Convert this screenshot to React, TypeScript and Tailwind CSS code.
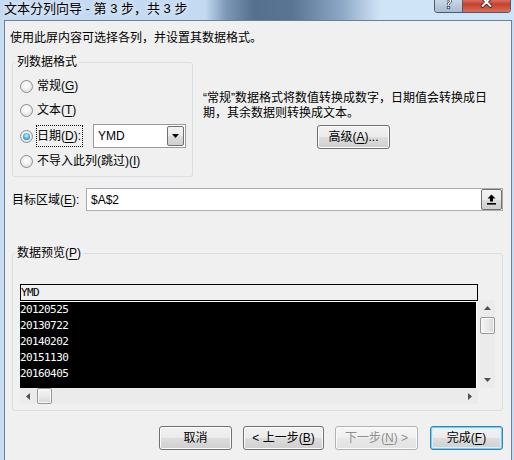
import React from "react";

const ui = "font-['Liberation_Sans','Noto_Sans_CJK_SC',sans-serif]";
const mono = "font-['DejaVu_Sans_Mono','Liberation_Mono',monospace]";

// underlined access key, like Windows shows them
const Key = ({ k }: { k: string }) => <u className="underline-offset-[2px]">{k}</u>;

const Radio = ({ checked }: { checked?: boolean }) => (
  <span className="flex h-[13px] w-[13px] shrink-0 items-center justify-center rounded-full border border-[#8e8f8f] bg-[#e9e9e9] bg-[radial-gradient(circle_at_45%_40%,#ffffff_0%,#f2f2f2_45%,#cdcdcd_100%)]">
    {checked && (
      <span className="h-[7px] w-[7px] rounded-full bg-[#3f8fd2] bg-[radial-gradient(circle_at_50%_40%,#d6f5ff_0%,#5db9f2_45%,#1b568f_100%)]" />
    )}
  </span>
);

type BtnProps = {
  className?: string;
  kind?: "normal" | "disabled" | "default";
  children: React.ReactNode;
};

const Btn: React.FC<BtnProps> = ({ className = "", kind = "normal", children }) => {
  const look =
    kind === "disabled"
      ? "border-[#adb2b5] bg-[#efefef] bg-[linear-gradient(#f6f6f6_0%,#f0f0f0_50%,#e8e8e8_51%,#e2e2e2_100%)] text-[#8f8f8f] shadow-[inset_0_0_0_1px_#fbfbfb]"
      : kind === "default"
        ? "border-[#3c7fb1] bg-[#e2e2e2] bg-[linear-gradient(#f2f2f2_0%,#ebebeb_50%,#dddddd_51%,#cfcfcf_100%)] shadow-[inset_0_0_0_1px_#6fd0f8,inset_0_0_0_2px_#d6f1fc]"
        : "border-[#707070] bg-[#e2e2e2] bg-[linear-gradient(#f2f2f2_0%,#ebebeb_50%,#dddddd_51%,#cfcfcf_100%)] shadow-[inset_0_0_0_1px_#fcfcfc]";
  return (
    <button
      type="button"
      className={`flex h-[24px] shrink-0 items-center justify-center rounded-[3px] border leading-none ${look} ${className}`}
    >
      {children}
    </button>
  );
};

const Arrow = ({ dir }: { dir: "up" | "down" | "left" | "right" }) => {
  const pts = {
    up: "0,4 7,4 3.5,0",
    down: "0,0 7,0 3.5,4",
    left: "4,0 4,7 0,3.5",
    right: "0,0 0,7 4,3.5",
  }[dir];
  const vert = dir === "up" || dir === "down";
  return (
    <svg width={vert ? 7 : 4} height={vert ? 4 : 7} viewBox={vert ? "0 0 7 4" : "0 0 4 7"}>
      <polygon points={pts} fill="#505050" />
    </svg>
  );
};

const HScroll = () => (
  <div className="flex h-[16px] w-[458px] items-center bg-[#ebebeb]">
    <div className="flex h-[16px] w-[16px] items-center justify-center">
      <Arrow dir="left" />
    </div>
    <div className="ml-[1px] h-[16px] w-[15px] rounded-[2px] border border-[#979797] bg-[#e6e6e6] bg-[linear-gradient(#f5f5f5_0%,#e6e6e6_60%,#d6d6d6_100%)] shadow-[inset_0_0_0_1px_#fafafa]" />
    <div className="flex-1" />
    <div className="flex h-[16px] w-[16px] items-center justify-center">
      <Arrow dir="right" />
    </div>
  </div>
);

const VScroll = () => (
  <div className="flex h-[88px] w-[15px] flex-col items-center bg-[#ebebeb]">
    <div className="flex h-[16px] w-[15px] items-center justify-center">
      <Arrow dir="up" />
    </div>
    <div className="mt-[1px] h-[17px] w-[15px] rounded-[2px] border border-[#979797] bg-[#e6e6e6] bg-[linear-gradient(to_right,#f5f5f5_0%,#e6e6e6_60%,#d6d6d6_100%)] shadow-[inset_0_0_0_1px_#fafafa]" />
    <div className="flex-1" />
    <div className="flex h-[16px] w-[15px] items-center justify-center">
      <Arrow dir="down" />
    </div>
  </div>
);

// blurred desktop seen through the aero glass of the title bar
const GlassBlob = () => (
  <svg width="175" height="20" viewBox="0 0 175 20" className="shrink-0">
    <defs>
      <linearGradient id="blob" x1="0" y1="0" x2="1" y2="0">
        <stop offset="0" stopColor="#c4daf2" />
        <stop offset="0.12" stopColor="#7d98b7" />
        <stop offset="0.28" stopColor="#55708f" />
        <stop offset="0.5" stopColor="#5a7593" />
        <stop offset="0.78" stopColor="#8ca8c6" />
        <stop offset="1" stopColor="#d0e4f7" />
      </linearGradient>
    </defs>
    <rect width="175" height="20" fill="url(#blob)" />
  </svg>
);

const CloseGlyph = () => (
  <svg width="47" height="12" viewBox="0 0 47 12" className="block">
    <defs>
      <linearGradient id="red" x1="0" y1="0" x2="0" y2="1">
        <stop offset="0" stopColor="#d9705d" />
        <stop offset="0.35" stopColor="#c7412f" />
        <stop offset="1" stopColor="#d8705a" />
      </linearGradient>
    </defs>
    <rect width="47" height="12" fill="url(#red)" />
    <path d="M19.5 -2 L27.5 6 M27.5 -2 L19.5 6" stroke="#3a1510" strokeWidth="3.6" strokeLinecap="round" />
    <path d="M19.5 -2 L27.5 6 M27.5 -2 L19.5 6" stroke="#ffffff" strokeWidth="2" strokeLinecap="round" />
  </svg>
);

const HelpGlyph = () => (
  <svg width="27" height="12" viewBox="0 0 27 12" className="block">
    <defs>
      <linearGradient id="help" x1="0" y1="0" x2="0" y2="1">
        <stop offset="0" stopColor="#c9d6e4" />
        <stop offset="1" stopColor="#a9bbd0" />
      </linearGradient>
    </defs>
    <rect width="27" height="12" fill="url(#help)" />
    <path d="M11 0.5 Q13.5 -1 15.5 0.5 Q16 2.5 13.5 3.5 L13.5 5" fill="none" stroke="#3d4b5c" strokeWidth="2.6" />
    <path d="M11 0.5 Q13.5 -1 15.5 0.5 Q16 2.5 13.5 3.5 L13.5 5" fill="none" stroke="#eef3f8" strokeWidth="1.2" />
    <rect x="12.3" y="6.3" width="2.4" height="2.4" fill="#eef3f8" stroke="#3d4b5c" strokeWidth="0.8" />
  </svg>
);

const rows = ["20120525", "20130722", "20140202", "20151130", "20160405"];

export default function App() {
  return (
    <div className={`h-[460px] w-[514px] overflow-hidden bg-[#c7dcf3] text-[12px] text-black ${ui}`}>
      {/* aero title bar */}
      <div className="flex h-[20px] bg-[#c4daf2]">
        <div className="w-[205px] shrink-0 pl-[4px] text-[13px] leading-[17px] whitespace-nowrap [text-shadow:0_0_6px_#ffffff]">
          文本分列向导 - 第 3 步，共 3 步
        </div>
        <GlassBlob />
        <div className="flex flex-1 bg-[#d0e4f7]">
          <div className="ml-auto mr-[3px] flex h-[13px] overflow-hidden rounded-b-[4px] border border-t-0 border-[#4b5a6e]">
            <div className="border-r border-[#4b5a6e]">
              <HelpGlyph />
            </div>
            <CloseGlyph />
          </div>
        </div>
      </div>

      {/* client area */}
      <div className="ml-[4px] h-[450px] w-[508px] border border-[#6e7f94] bg-[#f0f0f0]">
        <div className="pl-[5px] pt-[9px] leading-[16px]">使用此屏内容可选择各列，并设置其数据格式。</div>

        <div className="mt-[9px] flex pl-[7px]">
          <fieldset className="m-0 w-[181px] rounded-[3px] border border-[#d5dfe5] p-0 pb-[4px]">
            <legend className="ml-[2px] px-[2px] leading-[14px]">列数据格式</legend>
            <div className="pt-[5px]">
              <div className="flex h-[24px] items-center pl-[7px]">
                <Radio />
                <span className="ml-[4px]">
                  常规(<Key k="G" />)
                </span>
              </div>
              <div className="flex h-[24px] items-center pl-[7px]">
                <Radio />
                <span className="ml-[4px]">
                  文本(<Key k="T" />)
                </span>
              </div>
              <div className="flex h-[28px] items-center pl-[7px]">
                <Radio checked />
                <span className="ml-[3px] flex h-[22px] items-center border border-dotted border-black pr-[1px]">
                  日期(<Key k="D" />):
                </span>
                <div className="ml-[10px] flex h-[24px] w-[93px] border border-[#9a9a9a] bg-white">
                  <span className="flex-1 pl-[4px] leading-[22px]">YMD</span>
                  <span className="m-[1px] flex w-[17px] items-center justify-center rounded-[2px] border border-[#707070] bg-[#e2e2e2] bg-[linear-gradient(#f2f2f2_0%,#ebebeb_50%,#dddddd_51%,#cfcfcf_100%)]">
                    <svg width="7" height="4" viewBox="0 0 7 4">
                      <polygon points="0,0 7,0 3.5,4" fill="#000" />
                    </svg>
                  </span>
                </div>
              </div>
              <div className="flex h-[22px] items-center pl-[7px]">
                <Radio />
                <span className="ml-[4px]">
                  不导入此列(跳过)(<Key k="I" />)
                </span>
              </div>
            </div>
          </fieldset>

          <div className="ml-[10px] pt-[36px]">
            <p className="whitespace-nowrap leading-[15px]">“常规”数据格式将数值转换成数字，日期值会转换成日</p>
            <p className="leading-[15px]">期，其余数据则转换成文本。</p>
            <Btn className="ml-[114px] mt-[4px] w-[73px]">
              高级(<Key k="A" />)...
            </Btn>
          </div>
        </div>

        <div className="mt-[11px] flex items-center pl-[7px]">
          <span className="w-[74px]">
            目标区域(<Key k="E" />):
          </span>
          <div className="flex h-[23px] w-[417px] items-center border border-[#abadb3] bg-white">
            <span className="flex-1 pl-[4px]">$A$2</span>
            <span className="flex h-[21px] w-[21px] items-center justify-center rounded-[2px] border border-[#707070] bg-[#e2e2e2] bg-[linear-gradient(#f2f2f2_0%,#ebebeb_50%,#dddddd_51%,#cfcfcf_100%)]">
              <svg width="9" height="11" viewBox="0 0 9 11">
                <path d="M4.5 0.5 L8.5 4.5 L6 4.5 L6 7.5 L3 7.5 L3 4.5 L0.5 4.5 Z" fill="#000" />
                <rect x="0" y="9" width="9" height="1.6" fill="#000" />
              </svg>
            </span>
          </div>
        </div>

        <fieldset className="m-0 ml-[7px] mt-[35px] w-[491px] rounded-[3px] border border-[#d5dfe5] p-0 pb-[6px]">
          <legend className="ml-[2px] px-[2px] leading-[14px]">
            数据预览(<Key k="P" />)
          </legend>
          <div className="flex pl-[7px] pt-[24px]">
            <div className="w-[458px]">
              <div className={`h-[17px] border border-black bg-[#f0f0f0] text-[11px] leading-[15px] tracking-[-0.6px] ${mono}`}>
                YMD
              </div>
              <div className="h-[1px] bg-white" />
              <div className={`h-[86px] w-[457px] border-r border-white bg-black text-[11px] leading-[16px] tracking-[-0.6px] text-white ${mono}`}>
                {rows.map((r) => (
                  <div key={r}>{r}</div>
                ))}
              </div>
              <HScroll />
            </div>
            <div className="ml-[2px] pt-[16px]">
              <VScroll />
            </div>
          </div>
        </fieldset>

        <div className="mt-[15px] flex justify-end pr-[8px]">
          <Btn className="w-[73px]">取消</Btn>
          <Btn className="ml-[11px] w-[81px]">
            &lt; 上一步(<Key k="B" />)
          </Btn>
          <Btn kind="disabled" className="ml-[11px] w-[83px]">
            下一步(<Key k="N" />) &gt;
          </Btn>
          <Btn kind="default" className="ml-[12px] w-[73px]">
            完成(<Key k="F" />)
          </Btn>
        </div>
      </div>
    </div>
  );
}
